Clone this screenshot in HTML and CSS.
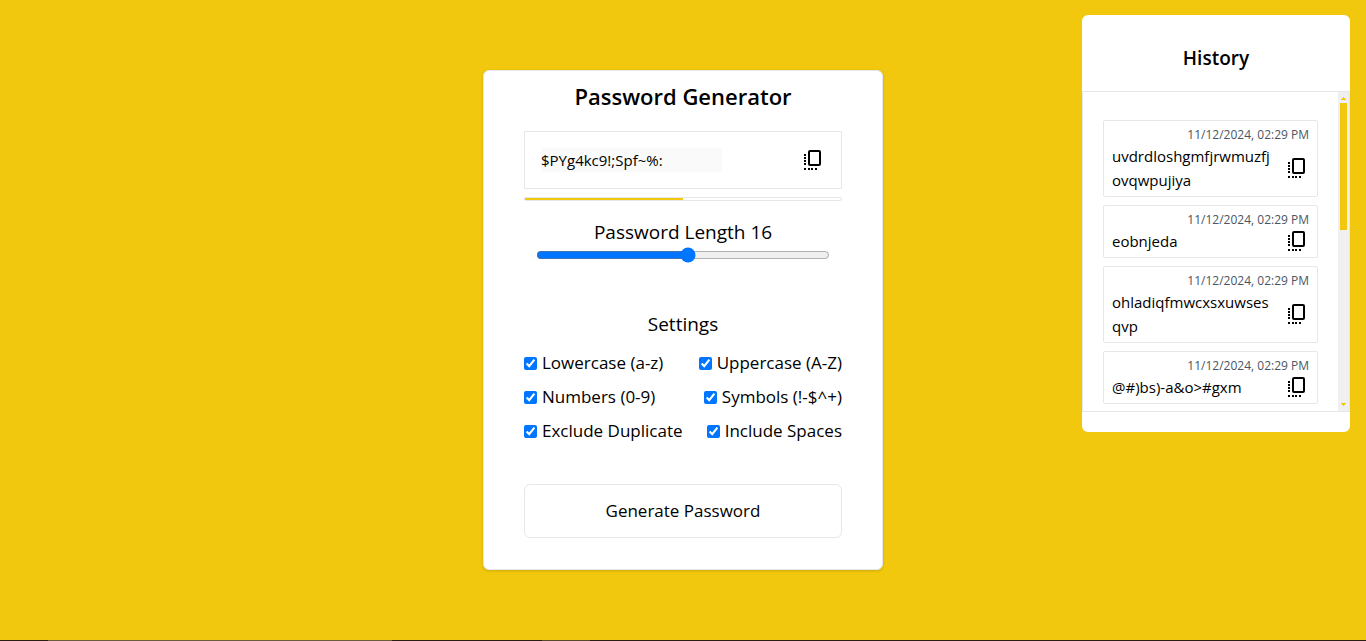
FILE: index.html
```html
<!DOCTYPE html>
<html lang="en">
<head>
<meta charset="utf-8">
<title>Password Generator</title>
<meta name="viewport" content="width=device-width, initial-scale=1">
<link rel="stylesheet" href="styles.css">
</head>
<body>
<svg class="sprite" aria-hidden="true">
  <symbol id="copy" viewBox="0 0 24 24">
    <rect x="8" y="3" width="11" height="14" rx="1" fill="none" stroke="currentColor" stroke-width="2"/>
    <path fill="currentColor" d="M3 6h2v2H3zM3 9h2v2H3zM3 12h2v2H3zM3 15h2v2H3zM3 20h2v2H3zM7 20h2v2H7zM10 20h2v2h-2zM14 20h2v2h-2z"/>
  </symbol>
</svg>
<main class="page">
  <section class="card">
    <h1 class="title">Password Generator</h1>
    <div class="output">
      <input class="password" type="text" aria-label="Generated password" value="$PYg4kc9!;Spf~%:" readonly>
      <button class="copy" type="button" aria-label="Copy password"><svg class="icon"><use href="#copy"/></svg></button>
    </div>
    <div class="strength"><div class="strength-fill"></div></div>
    <div class="length">
      <label class="heading" for="length">Password Length 16</label>
      <input class="slider" id="length" type="range" min="1" max="30" value="16">
    </div>
    <h2 class="heading">Settings</h2>
    <div class="options">
      <div class="row">
        <label class="option"><input class="check" type="checkbox" checked>Lowercase (a-z)</label>
        <label class="option"><input class="check" type="checkbox" checked>Uppercase (A-Z)</label>
      </div>
      <div class="row">
        <label class="option"><input class="check" type="checkbox" checked>Numbers (0-9)</label>
        <label class="option"><input class="check" type="checkbox" checked>Symbols (!-$^+)</label>
      </div>
      <div class="row">
        <label class="option"><input class="check" type="checkbox" checked>Exclude Duplicate</label>
        <label class="option"><input class="check" type="checkbox" checked>Include Spaces</label>
      </div>
    </div>
    <button class="generate" type="button">Generate Password</button>
  </section>
  <aside class="history">
    <h2 class="history-title">History</h2>
    <div class="history-body">
      <ul class="list">
        <li class="item"><time class="time">11/12/2024, 02:29 PM</time><div class="entry"><span class="value">uvdrdloshgmfjrwmuzfj<wbr>ovqwpujiya</span><button class="copy" type="button" aria-label="Copy"><svg class="icon"><use href="#copy"/></svg></button></div></li>
        <li class="item"><time class="time">11/12/2024, 02:29 PM</time><div class="entry"><span class="value">eobnjeda</span><button class="copy" type="button" aria-label="Copy"><svg class="icon"><use href="#copy"/></svg></button></div></li>
        <li class="item"><time class="time">11/12/2024, 02:29 PM</time><div class="entry"><span class="value">ohladiqfmwcxsxuwses<wbr>qvp</span><button class="copy" type="button" aria-label="Copy"><svg class="icon"><use href="#copy"/></svg></button></div></li>
        <li class="item"><time class="time">11/12/2024, 02:29 PM</time><div class="entry"><span class="value">@#)bs)-a&amp;o&gt;#gxm</span><button class="copy" type="button" aria-label="Copy"><svg class="icon"><use href="#copy"/></svg></button></div></li>
      </ul>
      <div class="scrollbar" aria-hidden="true">
        <svg class="arrow" viewBox="0 0 11 11"><path d="M5 5h1v1h1v1h1v1H3V7h1V6h1z" fill="currentColor"/></svg>
        <div class="track"><div class="thumb"></div></div>
        <svg class="arrow" viewBox="0 0 11 11"><path d="M3 3h5v1H7v1H6v1H5V5H4V4H3z" fill="currentColor"/></svg>
      </div>
    </div>
  </aside>
  <div class="bottom-edge"></div>
</main>
</body>
</html>
```
FILE: styles.css
```css
*, *::before, *::after { box-sizing: border-box; }
body {
  margin: 0;
  background: #f1c80d;
  color: #000;
  font-family: "Segoe UI", "Open Sans", "Noto Sans", sans-serif;
  font-size: 16px;
  line-height: 24px;
}
h1, h2, ul { margin: 0; padding: 0; font-weight: 400; list-style: none; }
input, button { font: inherit; color: inherit; margin: 0; }
.sprite { display: none; }
.page { position: relative; min-height: 100vh; padding-bottom: 1px; display: grid; place-items: center; }

.card {
  display: flex;
  flex-direction: column;
  width: 400px;
  padding: 8px 40px 31px;
  background: #fff;
  border: 1px solid #e5e7eb;
  border-radius: 6px;
  box-shadow: 0 1px 3px rgba(0, 0, 0, 0.15);
}
.title { font-size: 22px; line-height: 34px; font-weight: 600; text-align: center; }
.output {
  display: flex;
  align-items: center;
  justify-content: space-between;
  height: 58px;
  margin-top: 18px;
  padding: 0 16px;
  border: 1px solid #e5e7eb;
}
.password { width: 181px; height: 24px; padding: 0; border: 0; outline: 0; background: #fafafa; font-size: 15px; }
.copy { display: flex; padding: 0; border: 0; background: none; cursor: pointer; }
.icon { width: 24px; height: 24px; }
.strength { height: 4px; margin-top: 8px; border: 1px solid #e5e7eb; border-radius: 2px; }
.strength-fill { width: 50%; height: 2px; background: #f1c80d; }
.length { display: flex; flex-direction: column; margin-top: 17px; padding: 0 12px; }
.heading { font-size: 19px; line-height: 28px; text-align: center; }
.slider { width: 100%; height: 16px; margin: 1px 0 47px; accent-color: #0075ff; }
.options { display: flex; flex-direction: column; gap: 10px; margin-top: 13px; }
.row { display: flex; justify-content: space-between; }
.option { display: flex; align-items: center; gap: 5px; font-size: 17px; }
.check { width: 13px; height: 13px; accent-color: #0075ff; }
.generate {
  height: 54px;
  margin-top: 41px;
  background: #fff;
  border: 1px solid #e5e7eb;
  border-radius: 6px;
  font-size: 17px;
}

.history {
  position: absolute;
  top: 15px;
  right: 16px;
  width: 268px;
  padding-bottom: 20px;
  background: #fff;
  border-radius: 6px;
}
.history-title { padding: 29px 0 19px; font-size: 19px; line-height: 28px; font-weight: 600; text-align: center; }
.history-body { display: flex; height: 321px; overflow: hidden; border: 1px solid #e5e7eb; }
.list { flex: 1; display: flex; flex-direction: column; gap: 8px; padding: 28px 20px 0; }
.item { padding: 4px 8px; border: 1px solid #e5e7eb; border-radius: 2px; }
.time { display: block; font-size: 12px; line-height: 19px; text-align: right; color: #4b5563; }
.entry { display: flex; align-items: center; justify-content: space-between; }
.value { font-size: 15px; }
.scrollbar { display: flex; flex-direction: column; width: 11px; background: #f0f0f0; color: #f1c80d; }
.arrow { display: block; width: 11px; height: 11px; }
.track { flex: 1; padding: 0 2px; }
.thumb { height: 127px; background: currentColor; }

.bottom-edge {
  position: absolute;
  inset: auto 0 0;
  height: 1px;
  background: linear-gradient(90deg, #2b1d12 48px, #6b5d3c 48px 392px, #2b1d12 392px 542px, #57492a 542px 590px, #2b1d12 590px);
}
```
